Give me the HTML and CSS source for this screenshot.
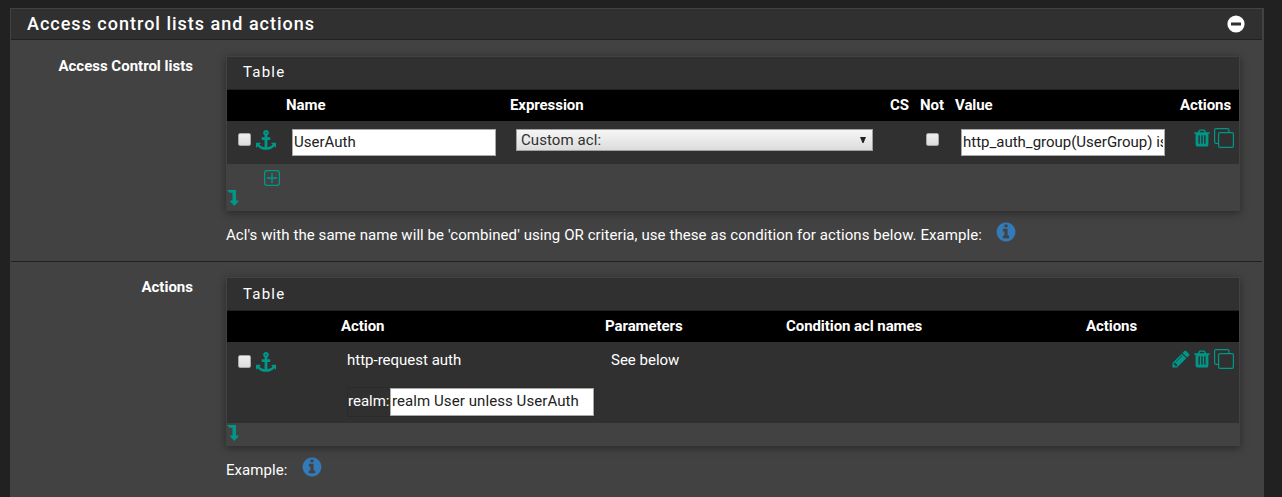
FILE: index.html
```html
<!DOCTYPE html>
<html lang="en">
<head>
<meta charset="utf-8">
<title>Access control lists and actions</title>
<link rel="stylesheet" href="styles.css">
</head>
<body>
<svg class="sprite" aria-hidden="true">
  <symbol id="anchor" viewBox="0 0 1792 1792"><path d="M960 256q0-26-19-45t-45-19-45 19-19 45 19 45 45 19 45-19 19-45zm832 928v352q0 22-20 30-8 2-12 2-12 0-23-9l-93-93q-119 143-318.500 226.500t-429.500 83.500-429.500-83.500-318.500-226.500l-93 93q-9 9-23 9-4 0-12-2-20-8-20-30v-352q0-14 9-23t23-9h352q22 0 30 20 8 19-7 35l-100 100q67 91 189.500 153.500t271.500 82.500v-647h-192q-26 0-45-19t-19-45v-128q0-26 19-45t45-19h192v-163q-58-34-93-92.500t-35-128.500q0-106 75-181t181-75 181 75 75 181q0 70-35 128.500t-93 92.500v163h192q26 0 45 19t19 45v128q0 26-19 45t-45 19h-192v647q149-20 271.500-82.500t189.500-153.500l-100-100q-15-16-7-35 8-20 30-20h352q14 0 23 9t9 23z"/></symbol>
  <symbol id="trash" viewBox="0 0 1792 1792"><path d="M704 1376v-704q0-14-9-23t-23-9h-64q-14 0-23 9t-9 23v704q0 14 9 23t23 9h64q14 0 23-9t9-23zm256 0v-704q0-14-9-23t-23-9h-64q-14 0-23 9t-9 23v704q0 14 9 23t23 9h64q14 0 23-9t9-23zm256 0v-704q0-14-9-23t-23-9h-64q-14 0-23 9t-9 23v704q0 14 9 23t23 9h64q14 0 23-9t9-23zm-544-992h448l-48-117q-7-9-17-11h-317q-10 2-17 11zm928 32v64q0 14-9 23t-23 9h-96v948q0 83-47 143.500t-113 60.500h-832q-66 0-113-58.500t-47-141.500v-952h-96q-14 0-23-9t-9-23v-64q0-14 9-23t23-9h309l70-167q15-37 54-63t79-26h320q40 0 79 26t54 63l70 167h309q14 0 23 9t9 23z"/></symbol>
  <symbol id="pencil" viewBox="0 0 1792 1792"><path d="M491 1536l91-91-235-235-91 91v107h128v128h107zm523-928q0-22-22-22-10 0-17 7l-542 542q-7 7-7 17 0 22 22 22 10 0 17-7l542-542q7-7 7-17zm-54-192l416 416-832 832h-416v-416zm683 96q0 53-37 90l-166 166-416-416 166-165q36-38 90-38 53 0 91 38l235 234q37 39 37 91z"/></symbol>
  <symbol id="info" viewBox="0 0 1792 1792"><path d="M1152 1376v-160q0-14-9-23t-23-9h-96v-512q0-14-9-23t-23-9h-320q-14 0-23 9t-9 23v160q0 14 9 23t23 9h96v320h-96q-14 0-23 9t-9 23v160q0 14 9 23t23 9h448q14 0 23-9t9-23zm-128-896v-160q0-14-9-23t-23-9h-192q-14 0-23 9t-9 23v160q0 14 9 23t23 9h192q14 0 23-9t9-23zm640 416q0 209-103 385.500t-279.500 279.500-385.500 103-385.500-103-279.500-279.500-103-385.500 103-385.500 279.500-279.500 385.500-103 385.500 103 279.500 279.500 103 385.500z"/></symbol>
  <symbol id="copy" viewBox="0 0 20 20"><path fill="none" stroke="currentColor" stroke-width="1.2" d="M4 15.300H2Q.6 15.300.6 14V2Q.6.6 2 .6H13.500Q14.900.6 14.900 2V4M5.800 4.600H18Q19.400 4.600 19.400 6V18Q19.400 19.400 18 19.400H6Q4.600 19.400 4.600 18V6Q4.600 4.600 6 4.600Z"/></symbol>
  <symbol id="plus" viewBox="0 0 16 16"><path fill="none" stroke="currentColor" stroke-width="1.300" d="M3 .6H13Q15.400.6 15.400 3V13Q15.400 15.400 13 15.400H3Q.6 15.400.6 13V3Q.6.6 3 .6ZM8 3V13M3 8H13"/></symbol>
  <symbol id="turn" viewBox="0 0 12 16"><path d="M0 0H8.500Q9 0 9 .5V10.500H11.200Q11.900 10.700 11.400 11.400L7.700 15.600Q7.300 16 6.900 15.600L3.200 11.400Q2.700 10.700 3.400 10.500H5.500V2.800H2.500Z"/></symbol>
</svg>

<section class="panel">
  <header class="panel-heading">
    <h2>Access control lists and actions</h2>
    <svg class="collapse" viewBox="0 0 18 18"><circle cx="9" cy="9" r="8.600" fill="#fff"/><rect x="4" y="7.600" width="10" height="2.900" rx=".5" fill="#303030"/></svg>
  </header>

  <div class="form-row acl-group">
    <div class="label">Access Control lists</div>
    <div class="field">
      <div class="table-panel">
        <div class="table-title">Table</div>
        <div class="grid acl head">
          <span></span><span>Name</span><span>Expression</span><span>CS</span><span>Not</span><span>Value</span><span>Actions</span>
        </div>
        <div class="grid acl body">
          <div class="handle"><input type="checkbox" class="check"><svg class="icon"><use href="#anchor"/></svg></div>
          <div class="cell"><input class="text" value="UserAuth"></div>
          <div class="cell"><div class="select"><span>Custom acl:</span><svg class="caret" viewBox="0 0 6 6"><path d="M0 0H6L3.500 6H2.500Z"/></svg></div></div>
          <span></span>
          <div class="cell not"><input type="checkbox" class="check"></div>
          <div class="cell"><input class="text" value="http_auth_group(UserGroup) is member"></div>
          <div class="tools"><svg class="icon"><use href="#trash"/></svg><svg class="icon copy"><use href="#copy"/></svg></div>
        </div>
        <div class="table-foot"><svg class="plus"><use href="#plus"/></svg><svg class="turn"><use href="#turn"/></svg></div>
      </div>
      <div class="help"><span>Acl's with the same name will be 'combined' using OR criteria, use these as condition for actions below. Example:</span><svg class="info"><use href="#info"/></svg></div>
    </div>
  </div>

  <div class="form-row action-group">
    <div class="label">Actions</div>
    <div class="field">
      <div class="table-panel">
        <div class="table-title">Table</div>
        <div class="grid act head">
          <span></span><span>Action</span><span>Parameters</span><span>Condition acl names</span><span>Actions</span>
        </div>
        <div class="grid act body">
          <div class="handle"><input type="checkbox" class="check"><svg class="icon"><use href="#anchor"/></svg></div>
          <div class="cell">http-request auth</div>
          <div class="cell">See below</div>
          <span></span>
          <div class="tools"><svg class="icon"><use href="#pencil"/></svg><svg class="icon"><use href="#trash"/></svg><svg class="icon copy"><use href="#copy"/></svg></div>
        </div>
        <div class="realm"><div class="realm-box"><span>realm:</span><input class="text" value="realm User unless UserAuth"></div></div>
        <div class="table-foot short"><svg class="turn"><use href="#turn"/></svg></div>
      </div>
      <div class="help"><span>Example:</span><svg class="info"><use href="#info"/></svg></div>
    </div>
  </div>
</section>
</body>
</html>
```

FILE: styles.css
```css
* { box-sizing: border-box; }
body {
  margin: 0;
  padding: 8px 18px 0 10px;
  background: #212121;
  color: #fff;
  font: 15px/20px Roboto, sans-serif;
}
svg { display: block; flex: none; fill: currentColor; }
.sprite { position: absolute; width: 0; height: 0; }
.panel {
  height: 489px;
  background: #424242;
  border: 1px solid #424242;
  border-right-width: 2px;
  border-bottom: 0;
}
.panel-heading {
  display: flex;
  justify-content: space-between;
  align-items: center;
  height: 31px;
  padding: 0 17px 0 16px;
  background: #303030;
  border-bottom: 1px solid #212121;
}
.panel-heading h2 { margin: 0; font-size: 18px; font-weight: 500; letter-spacing: 1px; }
.collapse { width: 18px; height: 18px; }
.form-row { display: flex; padding-top: 16px; }
.acl-group { height: 222px; border-bottom: 1px solid #212121; }
.action-group { padding-top: 15px; }
.label { width: 215px; padding-right: 33px; text-align: right; font-weight: 700; }
.field { width: 1014px; }
.table-panel {
  border: 1px solid #424242;
  border-bottom: 0;
  background: #303030;
  box-shadow: 0 2px 8px rgba(0, 0, 0, .4);
}
.table-title {
  height: 33px;
  padding: 5px 16px 0;
  letter-spacing: 1.2px;
  border-bottom: 1px solid #212121;
}
.action-group .table-title { padding-top: 6px; }
.grid { display: grid; }
.acl { grid-template-columns: 59px 224px 380px 30px 35px 225px 59px; }
.act { grid-template-columns: 114px 264px 181px 300px 153px; }
.head { height: 31px; padding-top: 5px; background: #000; font-weight: 700; letter-spacing: -.07px; }
.body.acl { height: 43px; }
.body.act { height: 45px; }
.cell { padding: 8px 0 0 6px; }
.cell.not { padding-top: 12px; }
.handle { display: flex; gap: 5px; padding: 9px 0 0 11px; }
.handle .check { margin-top: 3px; }
.act .handle { padding-top: 10px; }
.icon { width: 20px; height: 20px; color: #009688; }
.tools { display: flex; justify-content: flex-end; padding: 7px 5px 0 0; }
.tools .icon + .icon { margin-left: 1px; }
.tools .icon + .copy { margin-left: 2px; }
.text {
  display: block;
  width: 204px;
  height: 27px;
  padding: 0 1px 2px;
  border: 1px solid #a9a9a9;
  background: #fff;
  color: #212121;
  font: inherit;
}
.check {
  appearance: none;
  display: block;
  width: 13px;
  height: 13px;
  margin: 0;
  border: 1px solid #a8a8a8;
  border-radius: 2px;
  background: linear-gradient(#eee, #dcdcdc);
}
.select {
  display: flex;
  justify-content: space-between;
  align-items: center;
  width: 357px;
  height: 22px;
  padding: 0 6px 0 4px;
  border: 1px solid #a0a0a0;
  background: linear-gradient(#f6f6f6, #dcdcdc);
  color: #303030;
  letter-spacing: .08px;
}
.caret { width: 6px; height: 6px; color: #212121; }
.table-foot { height: 47px; padding-top: 6px; background: #424242; color: #009688; }
.plus { width: 16px; height: 16px; margin: 0 0 4px 37px; }
.turn { width: 12px; height: 16px; }
.table-foot.short { height: 23px; padding-top: 2px; }
.help { display: flex; align-items: flex-start; padding-top: 14px; letter-spacing: .075px; }
.info { width: 22px; height: 22px; margin: -4px 0 0 13px; color: #337ab7; }
.realm { height: 36px; padding-left: 120px; }
.realm-box {
  display: flex;
  align-items: center;
  width: 248px;
  height: 30px;
  border: 1px solid #2b2b2b;
}
.realm-box span { width: 42px; flex: none; padding-bottom: 2px; }
.realm-box .text { height: 28px; letter-spacing: .08px; }
```
